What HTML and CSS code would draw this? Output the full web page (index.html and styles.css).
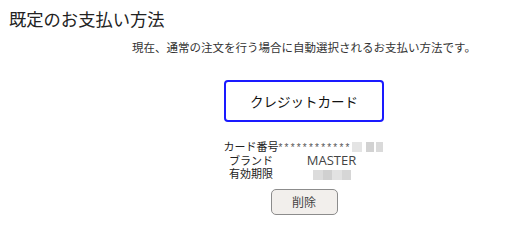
FILE: index.html
```html
<!DOCTYPE html>
<html lang="ja">
<head>
<meta charset="utf-8">
<link rel="stylesheet" href="styles.css">
</head>
<body>
<h1 class="title">既定のお支払い方法</h1>
<section class="content">
  <p class="desc">現在、通常の注文を行う場合に自動選択されるお支払い方法です。</p>
  <div class="method">クレジットカード</div>
  <table class="info">
    <tr>
      <th>カード番号</th>
      <td class="num"><span class="stars">************</span><span class="blur b1"></span><span class="blur b2"></span><span class="blur b3"></span></td>
    </tr>
    <tr>
      <th>ブランド</th>
      <td class="latin">MASTER</td>
    </tr>
    <tr>
      <th>有効期限</th>
      <td><span class="blur e1"></span><span class="blur e2"></span><span class="blur e3"></span><span class="blur e4"></span></td>
    </tr>
  </table>
  <button class="delete" type="button">削除</button>
</section>
</body>
</html>
```

FILE: styles.css
```css
* { box-sizing: border-box; }
body {
  margin: 0;
  font-family: "Noto Sans CJK JP", "Noto Sans", sans-serif;
  color: #222;
  background: #fff;
}
.title {
  margin: 0;
  padding: 9px 0 0 9px;
  font-size: 17.3px;
  font-weight: normal;
  line-height: 20px;
}
.content {
  margin-left: 96px;
  display: flex;
  flex-direction: column;
  align-items: center;
}
.desc {
  margin: 10px 0 0;
  font-size: 11.5px;
  line-height: 16px;
  color: #333;
}
.method {
  margin-top: 25px;
  width: 160px;
  height: 42px;
  border: 2px solid #1a1aff;
  border-radius: 4px;
  display: flex;
  align-items: center;
  justify-content: center;
  font-size: 13.5px;
  color: #111;
}
.info {
  margin-top: 17px;
  border-collapse: collapse;
  font-size: 11px;
  line-height: 13px;
}
.info th, .info td {
  padding: 0;
  font-weight: normal;
  text-align: center;
  vertical-align: middle;
  white-space: nowrap;
}
.info th { width: 54px; }
.info td { width: 106px; }
.num { text-align: left !important; }
.stars {
  font-family: "Liberation Sans", sans-serif;
  font-size: 10px;
  letter-spacing: 2.2px;
  color: #555;
  vertical-align: middle;
}
.latin {
  font-family: "Open Sans", sans-serif;
  font-size: 13px;
  color: #444;
}
.blur {
  display: inline-block;
  height: 10px;
  vertical-align: middle;
}
.b1 { width: 10px; background: #e4e4e4; }
.b2 { width: 8px; background: #d2d2d2; margin-left: 4px; }
.b3 { width: 7px; background: #dadada; margin-left: 2px; }
.e1 { width: 10px; background: #dcdcdc; }
.e2 { width: 9px; background: #d0d0d0; }
.e3 { width: 10px; background: #e2e2e2; }
.e4 { width: 9px; background: #d6d6d6; }
.delete {
  margin-top: 9px;
  width: 67px;
  height: 26px;
  padding: 0;
  border: 1px solid #8c8c8c;
  border-radius: 5px;
  background: #f2efec;
  font-family: inherit;
  font-size: 12px;
  color: #444;
}
```
